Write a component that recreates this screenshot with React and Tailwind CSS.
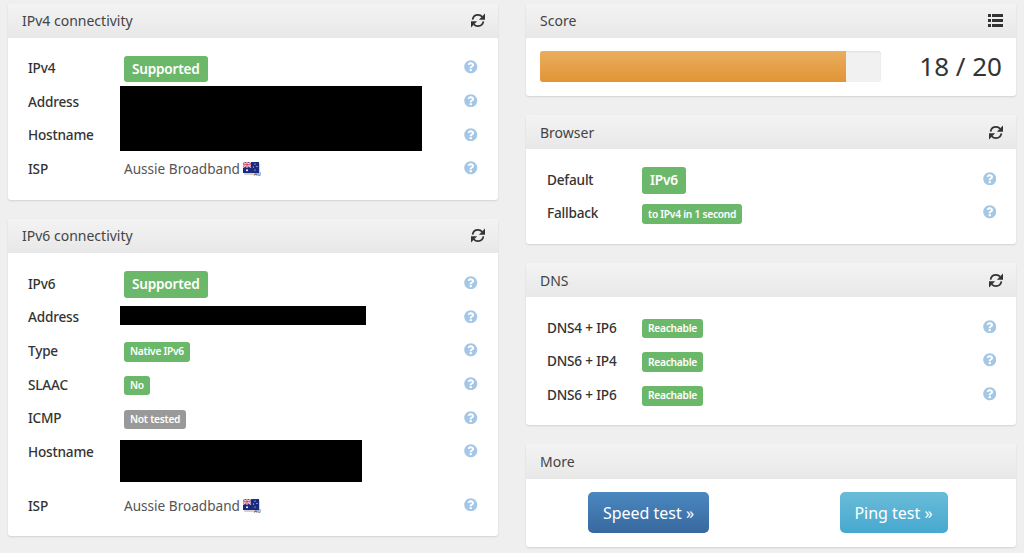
import React from "react";
import { FaQuestionCircle } from "react-icons/fa";

// Refresh icon: two arcs with solid arrow heads
const Refresh = () => (
  <svg width="14" height="15" viewBox="0 0 16 17" fill="none" className="block">
    <path d="M1.8 7.4C2.4 4.2 4.9 2 8 2c1.9 0 3.7.9 4.8 2.3" stroke="#333" strokeWidth="2" />
    <path d="M16 .6V7.6H9Z" fill="#333" />
    <path d="M14.2 9.6c-.6 3.2-3.1 5.4-6.2 5.4-1.9 0-3.7-.9-4.8-2.3" stroke="#333" strokeWidth="2" />
    <path d="M0 16.4V9.4H7Z" fill="#333" />
  </svg>
);

// List icon for the score panel
const ListIcon = () => (
  <svg width="15" height="13" viewBox="0 0 15 13" fill="#333" className="block">
    <rect x="0" y="0" width="3" height="3" />
    <rect x="4" y="0" width="11" height="3" />
    <rect x="0" y="5" width="3" height="3" />
    <rect x="4" y="5" width="11" height="3" />
    <rect x="0" y="10" width="3" height="3" />
    <rect x="4" y="10" width="11" height="3" />
  </svg>
);

// Small Australian flag with the country code underneath
const Flag = () => (
  <svg width="18" height="15" viewBox="0 0 18 15" className="ml-[3.5px] mt-[1px] shrink-0">
    <rect x="1" y="1" width="16" height="12" rx="1" fill="#000" opacity="0.18" />
    <rect x="0" y="0" width="16" height="11" fill="#1b2a80" />
    <rect x="0" y="0" width="8" height="5.5" fill="#3b3f9a" />
    <path d="M0 0L8 5.5M8 0L0 5.5" stroke="#f3c6c6" strokeWidth="1.2" />
    <path d="M4 0V5.5M0 2.75H8" stroke="#fff" strokeWidth="1.8" />
    <path d="M4 0V5.5M0 2.75H8" stroke="#d8324a" strokeWidth="1" />
    <circle cx="4" cy="8.3" r="1" fill="#fff" />
    <circle cx="12" cy="2" r="0.6" fill="#fff" />
    <circle cx="14" cy="4.5" r="0.6" fill="#fff" />
    <circle cx="10.5" cy="5" r="0.6" fill="#fff" />
    <circle cx="12" cy="8" r="0.6" fill="#fff" />
    <text x="11" y="14" fontSize="5" fill="#333" fontFamily="Noto Sans, sans-serif">AU</text>
  </svg>
);

const Help = () => (
  <FaQuestionCircle className="text-[#a5c7e6] text-[13.5px] mb-[2.5px]" />
);

// Big green label
const BigBadge = ({ children }) => (
  <span className="inline-flex items-center h-[26.5px] mt-[1px] px-2 rounded-[3px] bg-[#6cb86b] text-white text-[13.6px] font-semibold tracking-[-0.2px]">
    {children}
  </span>
);

// Small label, green by default
const SmallBadge = ({ children, gray }) => (
  <span
    className={
      "inline-flex items-center h-[19.5px] mt-[1.5px] px-[6px] rounded-[3px] text-white text-[10.2px] font-semibold tracking-[-0.25px] " +
      (gray ? "bg-[#999999]" : "bg-[#6cb86b]")
    }
  >
    {children}
  </span>
);

const Isp = () => (
  <span className="flex items-center text-[#555] text-[13.6px]">
    Aussie Broadband
    <Flag />
  </span>
);

const Row = ({ label, children, tall, wide }) => (
  <div className={"flex items-start " + (tall ? "h-[53.67px]" : "h-[33.67px]")}>
    <div className={"h-[33.67px] flex items-center font-medium text-[#333] text-[13.6px] tracking-[-0.2px] shrink-0 " + (wide ? "w-[95px]" : "w-24")}>
      {label}
    </div>
    <div className="h-[33.67px] flex items-center flex-1 relative">{children}</div>
    <div className="h-[33.67px] flex items-center">
      <Help />
    </div>
  </div>
);

const Panel = ({ title, icon, tallHead, children }) => (
  <div className="bg-white rounded-[3px] shadow-[0_1px_2px_rgba(0,0,0,0.12)] overflow-hidden">
    <div
      className={
        "flex items-center justify-between pl-[14px] pr-[13.5px] bg-gradient-to-b from-[#f3f3f3] to-[#e8e8e8] text-[#444] text-[14px] " +
        (tallHead ? "h-[34.7px]" : "h-[33.7px]")
      }
    >
      <span>{title}</span>
      {icon}
    </div>
    {children}
  </div>
);

const Body = ({ children, wide }) => (
  <div className={wide ? "pt-[13.6px] pb-[13.4px] pl-[21px] pr-[20px]" : "pt-[13.8px] pb-[13.8px] pl-5 pr-[20.5px]"}>
    {children}
  </div>
);

// Black box that hides personal data
const Redacted = ({ className }) => (
  <div className={"absolute bg-black " + className} />
);

export default function App() {
  return (
    <div
      className="min-h-[553px] bg-[#efefef] pt-1 px-2 flex gap-[28px] overflow-hidden"
      style={{ fontFamily: '"Noto Sans", sans-serif' }}
    >
      {/* Left column */}
      <div className="w-[490px] flex flex-col gap-[18.7px]">
        <Panel title="IPv4 connectivity" icon={<Refresh />}>
          <Body>
            <Row label="IPv4">
              <BigBadge>Supported</BigBadge>
            </Row>
            <Row label="Address">
              <Redacted className="left-[-4px] top-[1.2px] w-[302px] h-[64.6px]" />
            </Row>
            <Row label="Hostname" />
            <Row label="ISP">
              <Isp />
            </Row>
          </Body>
        </Panel>
        <Panel title="IPv6 connectivity" icon={<Refresh />} tallHead>
          <Body>
            <Row label="IPv6">
              <BigBadge>Supported</BigBadge>
            </Row>
            <Row label="Address">
              <Redacted className="left-[-4px] top-[5.4px] w-[245.5px] h-[19px]" />
            </Row>
            <Row label="Type">
              <SmallBadge>Native IPv6</SmallBadge>
            </Row>
            <Row label="SLAAC">
              <SmallBadge>No</SmallBadge>
            </Row>
            <Row label="ICMP">
              <SmallBadge gray>Not tested</SmallBadge>
            </Row>
            <Row label="Hostname" tall>
              <Redacted className="left-[-4px] top-[4.4px] w-[242px] h-[42px]" />
            </Row>
            <Row label="ISP">
              <Isp />
            </Row>
          </Body>
        </Panel>
      </div>

      {/* Right column */}
      <div className="w-[490px] flex flex-col gap-[19px]">
        <Panel title="Score" icon={<ListIcon />}>
          <div className="flex items-center pt-[13px] pb-[14px] pl-[14px] pr-[14px]">
            <div className="w-[341px] h-[31px] rounded-[3px] bg-[#f1f1f1] overflow-hidden shadow-[inset_0_1px_2px_rgba(0,0,0,0.08)]">
              <div className="w-[306px] h-full bg-gradient-to-b from-[#e9ae5c] to-[#e19434]" />
            </div>
            <div className="flex-1 text-right text-[#333] text-[26px] leading-none">18 / 20</div>
          </div>
        </Panel>
        <Panel title="Browser" icon={<Refresh />} tallHead>
          <Body wide>
            <Row label="Default" wide>
              <BigBadge>IPv6</BigBadge>
            </Row>
            <Row label="Fallback" wide>
              <SmallBadge>to IPv4 in 1 second</SmallBadge>
            </Row>
          </Body>
        </Panel>
        <Panel title="DNS" icon={<Refresh />} tallHead>
          <Body wide>
            <Row label="DNS4 + IP6" wide>
              <SmallBadge>Reachable</SmallBadge>
            </Row>
            <Row label="DNS6 + IP4" wide>
              <SmallBadge>Reachable</SmallBadge>
            </Row>
            <Row label="DNS6 + IP6" wide>
              <SmallBadge>Reachable</SmallBadge>
            </Row>
          </Body>
        </Panel>
        <Panel title="More" tallHead>
          <div className="grid grid-cols-2 py-[13.3px]">
            <div className="flex justify-center">
              <a className="h-[41px] w-[121px] flex items-center justify-center rounded-[5px] bg-gradient-to-b from-[#4b88c0] to-[#37699e] text-white text-[16px]">
                Speed test »
              </a>
            </div>
            <div className="flex justify-center">
              <a className="h-[41px] w-[108px] flex items-center justify-center rounded-[5px] bg-gradient-to-b from-[#69bcd8] to-[#46a8cf] text-white text-[16px]">
                Ping test »
              </a>
            </div>
          </div>
        </Panel>
      </div>
    </div>
  );
}
